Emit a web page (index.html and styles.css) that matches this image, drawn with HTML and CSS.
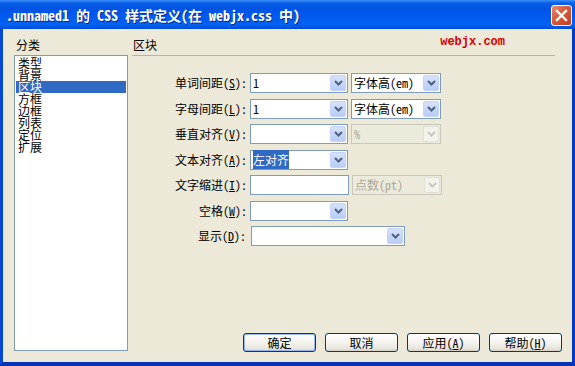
FILE: index.html
```html
<!DOCTYPE html>
<html lang="zh-CN">
<head>
    <meta charset="UTF-8">
    <title>.unnamed1 的 CSS 样式定义</title>
    <link rel="stylesheet" href="styles.css">
</head>
<body>
    <div class="window">
        <div class="titlebar">
            <span class="title">.unnamed1 的 CSS 样式定义(在 webjx.css 中)</span>
            <span class="close">
                <svg width="21" height="21" viewBox="0 0 21 21">
                    <path d="M6 6 L15 15 M15 6 L6 15" stroke="#fff" stroke-width="2.4" stroke-linecap="square" fill="none"/>
                </svg>
            </span>
        </div>
        <div class="client">
            <div class="category">
                <div class="caption">分类</div>
                <ul class="list">
                    <li>类型</li>
                    <li>背景</li>
                    <li class="selected">区块</li>
                    <li>方框</li>
                    <li>边框</li>
                    <li>列表</li>
                    <li>定位</li>
                    <li>扩展</li>
                </ul>
            </div>
            <div class="panel">
                <div class="panel-head">
                    <span>区块</span>
                    <span class="mark">webjx.com</span>
                </div>
                <div class="form">
                    <label>单词间距(<u>S</u>):</label>
                    <div class="fields">
                        <div class="combo w98"><span class="value">1</span><span class="drop"><svg width="9" height="6" viewBox="0 0 9 6"><polyline points="1,1 4.5,4.5 8,1" /></svg></span></div>
                        <div class="combo w90"><span class="value">字体高(em)</span><span class="drop"><svg width="9" height="6" viewBox="0 0 9 6"><polyline points="1,1 4.5,4.5 8,1" /></svg></span></div>
                    </div>

                    <label>字母间距(<u>L</u>):</label>
                    <div class="fields">
                        <div class="combo w98"><span class="value">1</span><span class="drop"><svg width="9" height="6" viewBox="0 0 9 6"><polyline points="1,1 4.5,4.5 8,1" /></svg></span></div>
                        <div class="combo w90"><span class="value">字体高(em)</span><span class="drop"><svg width="9" height="6" viewBox="0 0 9 6"><polyline points="1,1 4.5,4.5 8,1" /></svg></span></div>
                    </div>

                    <label>垂直对齐(<u>V</u>):</label>
                    <div class="fields">
                        <div class="combo w98"><span class="value"></span><span class="drop"><svg width="9" height="6" viewBox="0 0 9 6"><polyline points="1,1 4.5,4.5 8,1" /></svg></span></div>
                        <div class="combo w90 disabled"><span class="value">%</span><span class="drop"><svg width="9" height="6" viewBox="0 0 9 6"><polyline points="1,1 4.5,4.5 8,1" /></svg></span></div>
                    </div>

                    <label>文本对齐(<u>A</u>):</label>
                    <div class="fields">
                        <div class="combo w98"><span class="value"><span class="hilite">左对齐</span></span><span class="drop"><svg width="9" height="6" viewBox="0 0 9 6"><polyline points="1,1 4.5,4.5 8,1" /></svg></span></div>
                    </div>

                    <label>文字缩进(<u>I</u>):</label>
                    <div class="fields">
                        <div class="textbox"></div>
                        <div class="combo w90 disabled"><span class="value">点数(pt)</span><span class="drop"><svg width="9" height="6" viewBox="0 0 9 6"><polyline points="1,1 4.5,4.5 8,1" /></svg></span></div>
                    </div>

                    <label>空格(<u>W</u>):</label>
                    <div class="fields">
                        <div class="combo w98"><span class="value"></span><span class="drop"><svg width="9" height="6" viewBox="0 0 9 6"><polyline points="1,1 4.5,4.5 8,1" /></svg></span></div>
                    </div>

                    <label class="shift">显示(<u>D</u>):</label>
                    <div class="fields shift">
                        <div class="combo w154"><span class="value"></span><span class="drop"><svg width="9" height="6" viewBox="0 0 9 6"><polyline points="1,1 4.5,4.5 8,1" /></svg></span></div>
                    </div>
                </div>

                <div class="buttons">
                    <button class="default">确定</button>
                    <button>取消</button>
                    <button>应用(<u>A</u>)</button>
                    <button>帮助(<u>H</u>)</button>
                </div>
            </div>
        </div>
    </div>
</body>
</html>
```

FILE: styles.css
```css
html, body {
    margin: 0;
    padding: 0;
}
body {
    font-family: "Noto Sans Mono CJK SC", "Noto Sans CJK SC", sans-serif;
    font-size: 12px;
    line-height: 12px;
    color: #000;
    background: #fff;
}
.window {
    width: 575px;
    height: 366px;
    display: flex;
    flex-direction: column;
}
.titlebar {
    height: 29px;
    flex: none;
    display: flex;
    align-items: center;
    justify-content: space-between;
    padding: 0 3px 0 6px;
    background: linear-gradient(#3d8ff9 0, #0a5fe9 3px, #0054e3 9px, #0058ee 50%, #0262f2 85%, #004bd9 100%);
}
.title {
    color: #fff;
    font-weight: bold;
    font-size: 14px;
    line-height: 14px;
    margin-top: 1px;
    text-shadow: 1px 1px 0 #0a2a8c;
    white-space: pre;
}
.close {
    width: 21px;
    height: 21px;
    box-sizing: border-box;
    border: 1px solid #fff;
    border-radius: 3px;
    background: linear-gradient(135deg, #e98a6c 0, #d85a3a 45%, #c13d1f 100%);
    display: flex;
    align-items: center;
    justify-content: center;
    margin-top: 1px;
}
.close svg {
    margin: -1px;
}
.client {
    flex: 1;
    display: flex;
    gap: 4px;
    padding: 10px 10px 11px 11px;
    background: #ece9d8;
    border-left: 3px solid #0747d5;
    border-right: 3px solid #0638c4;
    border-bottom: 4px solid #0833b5;
}
.category {
    width: 114px;
    display: flex;
    flex-direction: column;
}
.caption {
    padding-left: 2px;
    height: 12px;
    margin-bottom: 4px;
}
.list {
    flex: 1;
    margin: 0;
    padding: 1px;
    list-style: none;
    background: #fff;
    border: 1px solid #7f9db9;
}
.list li {
    height: 12px;
    padding-left: 2px;
}
.list li.selected {
    background: #316ac5;
    color: #fff;
}
.panel {
    flex: 1;
    display: flex;
    flex-direction: column;
}
.panel-head {
    display: flex;
    align-items: flex-start;
    height: 12px;
    padding: 0 0 4px 1px;
    margin-right: 7px;
    border-bottom: 1px solid #aab3c1;
}
.mark {
    margin-left: auto;
    margin-right: 50px;
    margin-top: -3px;
    font-family: "Liberation Mono", monospace;
    font-weight: bold;
    font-size: 12px;
    color: #d40000;
}
.form {
    margin-top: 17px;
    display: grid;
    grid-template-columns: 115px auto;
    column-gap: 3px;
    row-gap: 5.5px;
    align-items: center;
}
.form label {
    justify-self: end;
    white-space: pre;
}
.fields {
    display: flex;
    gap: 3px;
}
.shift {
    margin-left: 1px;
}
label.shift {
    margin-right: 1px;
}
.combo {
    height: 20px;
    box-sizing: border-box;
    display: flex;
    align-items: center;
    border: 1px solid #7f9db9;
    background: #fff;
}
.w98 { width: 98px; }
.w90 { width: 90px; }
.w154 { width: 154px; }
.combo .value {
    flex: 1;
    padding-left: 2px;
    line-height: 16px;
    white-space: pre;
}
.hilite {
    background: #316ac5;
    color: #fff;
    padding: 1px 0;
}
.drop {
    width: 16px;
    height: 16px;
    flex: none;
    box-sizing: border-box;
    margin: 1px;
    border: 1px solid #c3d3fd;
    border-radius: 2px;
    background: linear-gradient(#d6e2fc, #b9ccf6);
    display: flex;
    align-items: center;
    justify-content: center;
}
.drop polyline {
    fill: none;
    stroke: #4d6185;
    stroke-width: 2;
}
.combo.disabled {
    border-color: #c9c7ba;
    background: #ebeadb;
    color: #aca899;
}
.combo.disabled .drop {
    border-color: #e2e0d6;
    background: #f3f2ec;
}
.combo.disabled .drop polyline {
    stroke: #c9c7ba;
}
.textbox {
    width: 99px;
    height: 20px;
    box-sizing: border-box;
    border: 1px solid #7f9db9;
    background: #fff;
}
.buttons {
    margin-top: auto;
    margin-bottom: -1px;
    display: flex;
    justify-content: flex-end;
    gap: 9px;
}
.buttons button {
    width: 73px;
    height: 19px;
    padding: 0;
    font-family: inherit;
    font-size: 12px;
    line-height: 12px;
    color: #000;
    border: 1px solid #003c74;
    border-radius: 3px;
    background: linear-gradient(#fff 0, #f4f3ee 50%, #e8e6dc 85%, #d6d0c5 100%);
}
.buttons button.default {
    box-shadow: inset 0 0 0 1px #99b6ee;
}
```
